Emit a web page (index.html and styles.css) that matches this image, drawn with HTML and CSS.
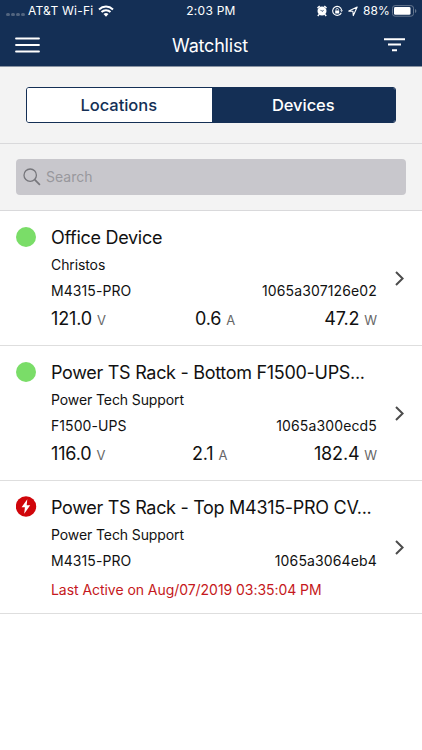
FILE: index.html
```html
<!DOCTYPE html>
<html lang="en">
<head>
<meta charset="utf-8">
<title>Watchlist</title>
<link rel="stylesheet" href="styles.css">
</head>
<body>
<header class="header">
  <div class="status">
    <div class="carrier">
      <span class="signal"><i></i><i></i><i></i><i></i></span>
      <span class="carrier-name">AT&amp;T Wi-Fi</span>
      <svg class="wifi" width="16" height="12" viewBox="0 0 16 12" fill="none" stroke="#fff" stroke-width="2"><path d="M1 4.4a10.2 10.2 0 0 1 14 0M3.5 7.1a6.6 6.6 0 0 1 9 0"/><path d="M5.5 9.1a3.7 3.7 0 0 1 5 0L8 11.7z" fill="#fff" stroke="none"/></svg>
    </div>
    <span class="time">2:03 PM</span>
    <div class="indicators">
      <svg width="10" height="12" viewBox="0 0 10 12"><circle cx="5" cy="6" r="4.5" fill="#fff"/><path d="M.4 3 2.7.9M9.6 3 7.3.9M2 9.5.8 11M8 9.5 9.2 11" stroke="#fff" stroke-width="1.4"/><path d="M5 6.4 3.5 4.9M5 6.4l1.6-1" stroke="#142f55" stroke-width=".8" fill="none"/></svg>
      <svg width="11" height="12" viewBox="0 0 11 12" fill="none" stroke="#fff" stroke-width="1.1"><path d="M9.3 7.7A4.5 4.5 0 1 1 9.6 5"/><path d="m8.1 5.3 1.6 1.8 1.2-1.8z" fill="#fff" stroke="none"/><path d="M3.2 5.5h4v3h-4z" fill="#fff" stroke="none"/><path d="M4 5.5V4.6a1.2 1.2 0 0 1 2.4 0v.9" stroke-width=".8"/></svg>
      <svg width="10" height="12" viewBox="0 0 10 12" fill="none" stroke="#fff" stroke-width="1.1" stroke-linejoin="round"><path d="m.8 6.1 8.4-4-3.9 8.5-.4-4.3z"/></svg>
      <span class="percent">88%</span>
      <svg class="battery" width="25" height="12" viewBox="0 0 25 12"><rect x=".5" y=".6" width="21" height="10.6" rx="2.6" fill="none" stroke="#66778f"/><rect x="2" y="2.1" width="16.5" height="7.6" rx="1.3" fill="#fff"/><path d="M23 4v4q1.4-.5 1.4-2T23 4" fill="#66778f"/></svg>
    </div>
  </div>
  <nav class="nav">
    <svg width="25" height="16" viewBox="0 0 25 16" stroke="#fff" stroke-width="1.8" stroke-linecap="round"><path d="M1 1.5h23M1 8h23M1 14.5h23"/></svg>
    <h1>Watchlist</h1>
    <svg width="21" height="14" viewBox="0 0 21 14" stroke="#fff" stroke-width="2"><path d="M0 1.2h21M4 6.6h13M8 12.2h5"/></svg>
  </nav>
</header>
<section class="tabs">
  <div class="segmented"><button>Locations</button><button class="active">Devices</button></div>
</section>
<section class="search">
  <div class="search-box">
    <svg width="18" height="18" viewBox="0 0 18 18" fill="none" stroke="#76767b" stroke-width="1.3"><circle cx="7.2" cy="7.2" r="6.2"/><path d="m11.7 11.7 5.2 5.2" stroke-width="1.7"/></svg>
    <span>Search</span>
  </div>
</section>
<main>
  <article class="device">
    <span class="dot"></span>
    <div class="info">
      <h2>Office Device</h2>
      <p>Christos</p>
      <div class="line"><span>M4315-PRO</span><span class="serial">1065a307126e02</span></div>
      <div class="metrics"><span>121.0 <small>V</small></span><span>0.6 <small>A</small></span><span>47.2 <small>W</small></span></div>
    </div>
    <svg class="chevron" width="9" height="15" viewBox="0 0 9 15" fill="none" stroke="#4c4c4c" stroke-width="2"><path d="m1 1 6.6 6.5L1 14"/></svg>
  </article>
  <article class="device">
    <span class="dot"></span>
    <div class="info">
      <h2>Power TS Rack - Bottom F1500-UPS...</h2>
      <p>Power Tech Support</p>
      <div class="line"><span>F1500-UPS</span><span class="serial">1065a300ecd5</span></div>
      <div class="metrics"><span>116.0 <small>V</small></span><span>2.1 <small>A</small></span><span>182.4 <small>W</small></span></div>
    </div>
    <svg class="chevron" width="9" height="15" viewBox="0 0 9 15" fill="none" stroke="#4c4c4c" stroke-width="2"><path d="m1 1 6.6 6.5L1 14"/></svg>
  </article>
  <article class="device offline">
    <svg class="alert" width="21" height="21" viewBox="0 0 21 21"><circle cx="10" cy="10.5" r="10.2" fill="#d0060b"/><path d="M11.3 3.2 5.6 11.3h3.3L8.2 17.8l6-8.5h-3.5z" fill="#fff"/></svg>
    <div class="info">
      <h2>Power TS Rack - Top M4315-PRO CV...</h2>
      <p>Power Tech Support</p>
      <div class="line"><span>M4315-PRO</span><span class="serial">1065a3064eb4</span></div>
      <div class="last">Last Active on Aug/07/2019 03:35:04 PM</div>
    </div>
    <svg class="chevron" width="9" height="15" viewBox="0 0 9 15" fill="none" stroke="#4c4c4c" stroke-width="2"><path d="m1 1 6.6 6.5L1 14"/></svg>
  </article>
</main>
</body>
</html>
```
FILE: styles.css
```css
* { box-sizing: border-box; }
body { margin: 0; background: #fff; color: #111; font-family: Inter, "Liberation Sans", sans-serif; }
h1, h2, p { margin: 0; font-weight: 400; }
svg { display: block; flex: none; }
.header { height: 67px; background: #142f55; color: #fff; border-bottom: 1px solid #8993a2; }
.status { height: 21px; display: grid; grid-template-columns: 1fr auto 1fr; align-items: center; padding: 0 6px 0 6px; font-size: 12px; line-height: 21px; letter-spacing: .25px; }
.carrier, .indicators, .signal { display: flex; align-items: center; }
.signal { gap: 1px; width: 22px; padding-top: 7px; }
.signal i { width: 4px; height: 3px; border-radius: 2px; background: #52657f; }
.wifi { margin-left: 4px; }
.indicators { justify-content: flex-end; gap: 5px; }
.percent { letter-spacing: .1px; }
.battery { margin: 0 -1px 0 -3px; }
.nav { height: 45px; padding: 3px 17px 0 15px; display: flex; align-items: center; justify-content: space-between; }
.nav h1 { font-size: 18px; letter-spacing: -.2px; margin-left: -4px; }
.tabs { height: 77px; background: #f3f3f3; border-bottom: 1px solid #d9d9db; padding: 20px 26px; }
.segmented { display: flex; height: 36px; border: 1px solid #142f55; border-radius: 3px; overflow: hidden; background: #fff; }
.segmented button { flex: 1; border: 0; padding: 0 1px 0 0; background: #fff; color: #142f55; font: 450 16.5px Inter, sans-serif; letter-spacing: -.05px; }
.segmented .active { background: #142f55; color: #fff; padding: 0; }
.search { height: 67px; padding: 15px 16px; background: #f3f3f3; border-bottom: 1px solid #d9d9db; }
.search-box { height: 36px; padding: 0 7px 1px; border-radius: 4px; background: #c8c7cc; color: #98989d; display: flex; align-items: center; gap: 5px; font-size: 14px; }
.device { height: 135px; border-bottom: 1px solid #dedede; padding: 14px 18px 0 16px; display: flex; align-items: flex-start; }
.device.offline { height: 133px; }
.dot { flex: none; width: 20px; height: 20px; margin: 2px 15px 0 0; border-radius: 50%; background: #7add68; }
.alert { margin: 1px 14px 0 0; }
.info { width: 326px; }
h2 { font-size: 18px; line-height: 26px; letter-spacing: -.3px; white-space: nowrap; }
p, .line, .last { font-size: 14px; line-height: 26px; }
p { padding-top: 1px; letter-spacing: -.1px; }
.line { display: flex; justify-content: space-between; line-height: 25px; letter-spacing: .07px; }
.serial { letter-spacing: .14px; }
.metrics { display: flex; justify-content: space-between; font-size: 18px; line-height: 31px; letter-spacing: -.15px; }
small { font-size: 13px; color: #666; }
.last { color: #c51820; line-height: 34px; letter-spacing: -.05px; }
.chevron { margin: 46px 0 0 18px; }
.offline .chevron { margin-top: 45px; }
```
